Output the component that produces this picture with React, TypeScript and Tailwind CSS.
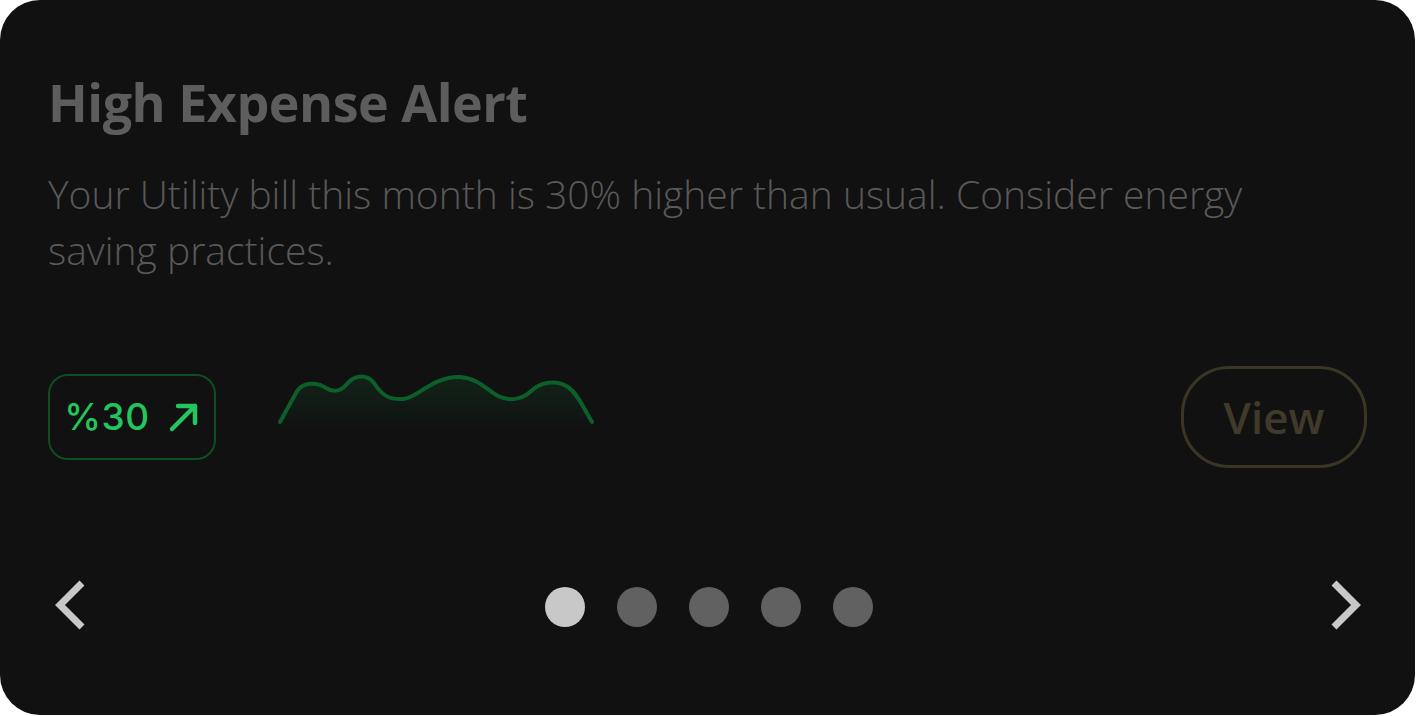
import React from "react";

function Sparkline() {
  return (
    <svg width="318" height="62" viewBox="0 0 318 62" fill="none">
      <defs>
        <linearGradient id="sg" x1="0" y1="0" x2="0" y2="1">
          <stop offset="0" stopColor="#16a34a" stopOpacity="0.12" />
          <stop offset="1" stopColor="#16a34a" stopOpacity="0" />
        </linearGradient>
      </defs>
      <path
        d="M2 53 L18 24 C24 12 40 13 48 19 C54 23 62 23 68 16 C76 6 88 4 96 14 C104 26 110 31 126 30 C140 28 156 7 182 8 C200 9 210 22 220 27 C232 33 244 30 252 23 C262 13 278 10 290 18 C300 25 306 40 314 53 L314 62 L2 62 Z"
        fill="url(#sg)"
      />
      <path
        d="M2 53 L18 24 C24 12 40 13 48 19 C54 23 62 23 68 16 C76 6 88 4 96 14 C104 26 110 31 126 30 C140 28 156 7 182 8 C200 9 210 22 220 27 C232 33 244 30 252 23 C262 13 278 10 290 18 C300 25 306 40 314 53"
        stroke="#0c5f29"
        strokeWidth="4"
        strokeLinecap="round"
        strokeLinejoin="round"
      />
    </svg>
  );
}

function Chevron({ dir }: { dir: "left" | "right" }) {
  return (
    <svg width="34" height="54" viewBox="0 0 34 54" fill="none">
      {dir === "left" ? (
        <path d="M30 3 L8 25 L30 47" stroke="#c8c8c8" strokeWidth="7" strokeLinecap="butt" strokeLinejoin="miter" />
      ) : (
        <path d="M5 3 L27 25 L5 47" stroke="#c8c8c8" strokeWidth="7" strokeLinecap="butt" strokeLinejoin="miter" />
      )}
    </svg>
  );
}

export default function App() {
  return (
    <div className="w-[1416px] h-[716px] bg-white">
      <div className="w-[1415px] h-[715px] rounded-[40px] bg-[#111111] flex flex-col px-12 pt-[70px]">
        <h1 className="text-[52px] leading-[64px] font-bold text-[#5d5d5d] font-['Open_Sans',sans-serif] tracking-[-0.5px]">
          High Expense Alert
        </h1>
        <p className="mt-[32px] w-[1260px] text-[39px] leading-[56px] text-[#595959] font-['Open_Sans',sans-serif] font-light">
          Your Utility bill this month is 30% higher than usual. Consider energy saving practices.
        </p>
        <div className="mt-[88px] flex items-center justify-between">
          <div className="flex items-center">
            <div className="w-[168px] h-[86px] rounded-[20px] border-2 border-[#0d4f23] flex items-center justify-center gap-[18px] font-['Inter',sans-serif]">
              <span className="text-[37px] font-medium text-[#22c55e] tracking-[0.5px]">%30</span>
              <svg width="32" height="32" viewBox="0 0 32 32" fill="none">
                <path d="M4 28 L27 5 M10 5 L27 5 L27 22" stroke="#22c55e" strokeWidth="4.5" strokeLinecap="round" strokeLinejoin="round" />
              </svg>
            </div>
            <div className="ml-[62px] mt-[-34px]">
              <Sparkline />
            </div>
          </div>
          <button className="w-[186px] h-[102px] rounded-[48px] border-[3px] border-[#3b3525] text-[44px] font-semibold text-[#3f3a29] font-['Open_Sans',sans-serif]">
            View
          </button>
        </div>
        <div className="mt-[112px] flex items-center justify-between pl-[4px] pr-[4px]">
          <Chevron dir="left" />
          <div className="flex gap-[32px] ml-[2px]">
            <span className="w-10 h-10 rounded-full bg-[#c8c8c8]" />
            <span className="w-10 h-10 rounded-full bg-[#616161]" />
            <span className="w-10 h-10 rounded-full bg-[#616161]" />
            <span className="w-10 h-10 rounded-full bg-[#616161]" />
            <span className="w-10 h-10 rounded-full bg-[#616161]" />
          </div>
          <Chevron dir="right" />
        </div>
      </div>
    </div>
  );
}
